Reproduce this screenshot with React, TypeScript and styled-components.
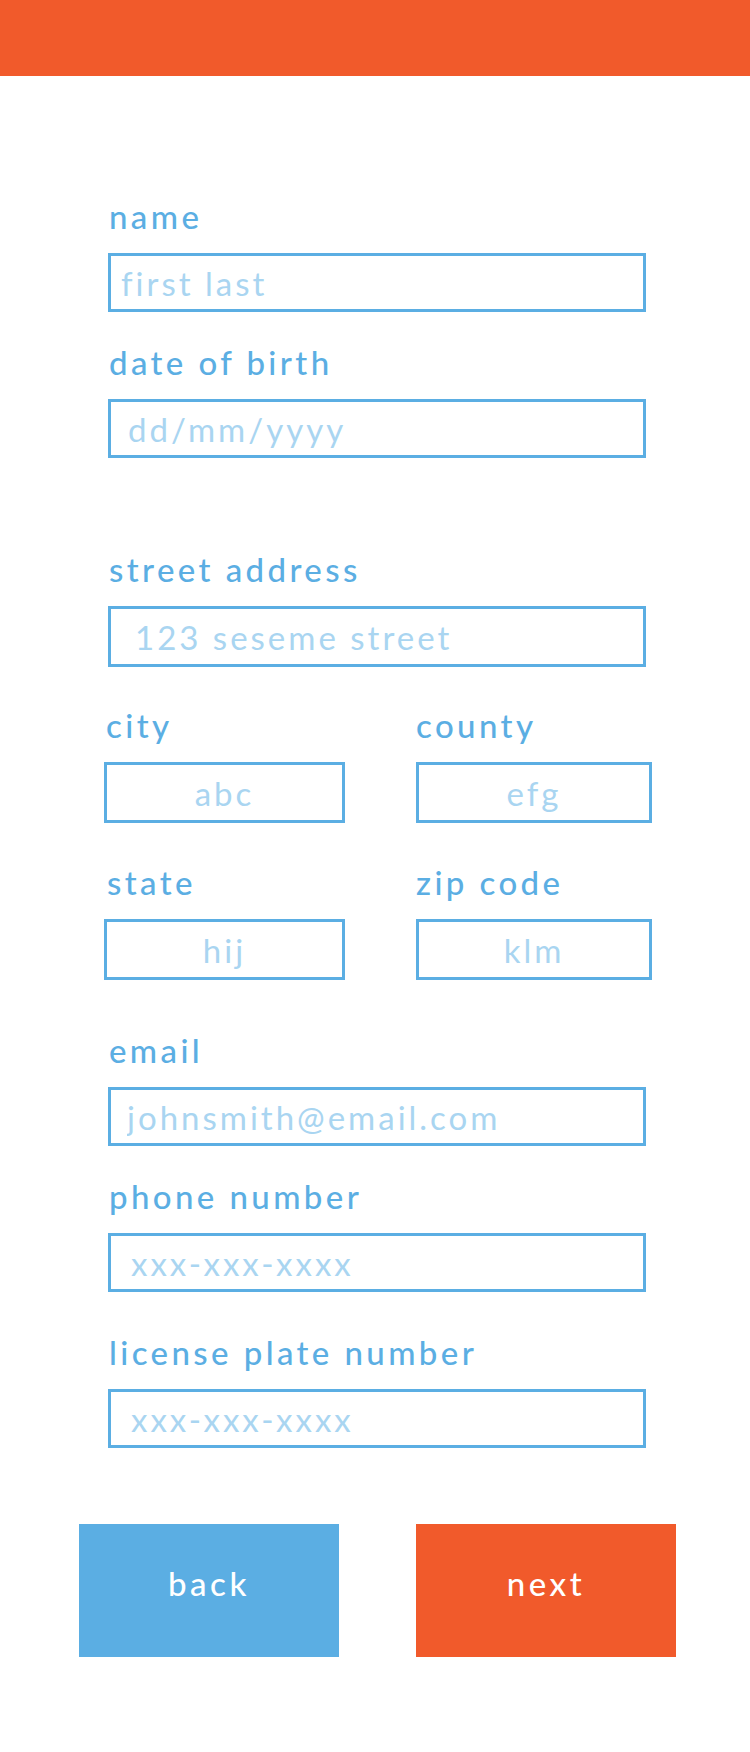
import * as React from 'react';
import styled, { createGlobalStyle } from 'styled-components';

const BLUE = '#5baee3';
const BLUE_LIGHT = '#a9d5f1';
const ORANGE = '#f15a2b';

const GlobalStyle = createGlobalStyle`
  body {
    margin: 0;
    background: #ffffff;
    font-family: Lato, 'Open Sans', sans-serif;
  }
  * {
    box-sizing: border-box;
  }
`;

const StyledPage = styled.div`
  width: 750px;
  min-height: 1752px;
  background: #ffffff;
`;

const StyledHeader = styled.header`
  height: 76px;
  background: ${ORANGE};
`;

const StyledForm = styled.form`
  display: flex;
  flex-direction: column;
  padding: 0 0 0 108px;
  width: 646px;
`;

const StyledField = styled.div<{ $top: number }>`
  display: flex;
  flex-direction: column;
  margin-top: ${(p) => p.$top}px;
`;

const StyledLabel = styled.label<{ $indent?: number }>`
  display: block;
  height: 36px;
  line-height: 36px;
  margin-bottom: 19px;
  padding-left: ${(p) => p.$indent ?? 1}px;
  font-size: 33px;
  font-weight: 500;
  letter-spacing: 3.4px;
  color: ${BLUE};
`;

const StyledInput = styled.input<{ $pad: number; $h?: number; $center?: boolean }>`
  display: block;
  width: 100%;
  height: ${(p) => p.$h ?? 59}px;
  margin: 0;
  padding: 1px 0 0 ${(p) => p.$pad}px;
  border: 3px solid ${BLUE};
  border-radius: 0;
  outline: none;
  background: #ffffff;
  font-family: Lato, 'Open Sans', sans-serif;
  font-size: 33px;
  letter-spacing: 3px;
  color: ${BLUE};
  text-align: ${(p) => (p.$center ? 'center' : 'left')};

  &::placeholder {
    color: ${BLUE_LIGHT};
    opacity: 1;
  }
`;

const StyledRow = styled.div<{ $top: number }>`
  display: grid;
  grid-template-columns: 241px 236px;
  column-gap: 71px;
  margin-top: ${(p) => p.$top}px;
  margin-left: -4px;
`;

const StyledCell = styled.div`
  display: flex;
  flex-direction: column;
`;

const StyledButtons = styled.div`
  display: flex;
  gap: 77px;
  margin: 76px 0 0 79px;
`;

const StyledButton = styled.button<{ $color: string }>`
  width: 260px;
  height: 133px;
  padding: 0 0 16px;
  border: none;
  border-radius: 0;
  background: ${(p) => p.$color};
  color: #ffffff;
  font-family: Lato, 'Open Sans', sans-serif;
  font-size: 33px;
  font-weight: 500;
  letter-spacing: 3.6px;
  cursor: pointer;
`;

interface FieldProps {
  label: string;
  placeholder: string;
  top: number;
  pad: number;
  height?: number;
}

const Field: React.FC<FieldProps> = ({ label, placeholder, top, pad, height }) => (
  <StyledField $top={top}>
    <StyledLabel>{label}</StyledLabel>
    <StyledInput placeholder={placeholder} $pad={pad} $h={height} />
  </StyledField>
);

const Cell: React.FC<{ label: string; placeholder: string; indent: number }> = ({
  label,
  placeholder,
  indent,
}) => (
  <StyledCell>
    <StyledLabel $indent={indent}>{label}</StyledLabel>
    <StyledInput placeholder={placeholder} $pad={0} $h={61} $center />
  </StyledCell>
);

export default function App() {
  return (
    <StyledPage>
      <GlobalStyle />
      <StyledHeader />
      <StyledForm onSubmit={(e) => e.preventDefault()}>
        <Field label="name" placeholder="first last" top={122} pad={10} />
        <Field label="date of birth" placeholder="dd/mm/yyyy" top={32} pad={17} />
        <Field label="street address" placeholder="123 seseme street" top={93} pad={24} height={61} />
        <StyledRow $top={40}>
          <Cell label="city" placeholder="abc" indent={2} />
          <Cell label="county" placeholder="efg" indent={0} />
        </StyledRow>
        <StyledRow $top={41}>
          <Cell label="state" placeholder="hij" indent={3} />
          <Cell label="zip code" placeholder="klm" indent={0} />
        </StyledRow>
        <Field label="email" placeholder="johnsmith@email.com" top={52} pad={16} />
        <Field label="phone number" placeholder="xxx-xxx-xxxx" top={32} pad={20} />
        <Field label="license plate number" placeholder="xxx-xxx-xxxx" top={42} pad={20} />
      </StyledForm>
      <StyledButtons>
        <StyledButton type="button" $color={BLUE}>back</StyledButton>
        <StyledButton type="button" $color={ORANGE}>next</StyledButton>
      </StyledButtons>
    </StyledPage>
  );
}
